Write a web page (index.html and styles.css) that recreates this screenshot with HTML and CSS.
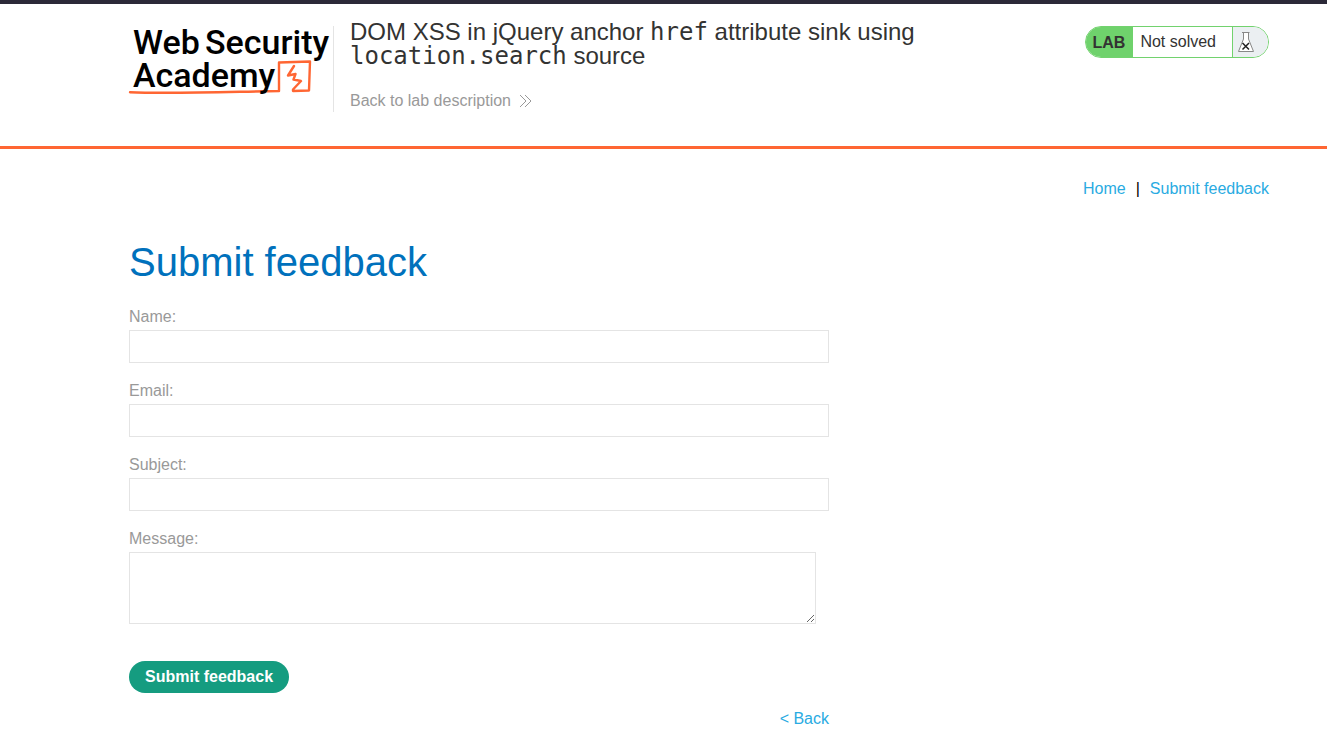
FILE: index.html
```html
<!DOCTYPE html>
<html lang="en">
<head>
<meta charset="utf-8">
<title>DOM XSS in jQuery anchor href attribute sink using location.search source</title>
<link rel="stylesheet" href="styles.css">
</head>
<body>
<header class="lab-header">
  <div class="container header-row">
    <a class="logo" href="#" aria-label="Web Security Academy">
      <svg width="204" height="72" viewBox="0 0 204 72">
        <path class="logo-line" d="M1 66.200C40 68 100 65.800 150 65V36.500L181 35.500L180 64.500L164 65V63.500L172 55L164.500 53.500L166.500 48L159 49.500L165 40"/>
        <g class="logo-text">
          <text x="4" y="28">Web</text>
          <text x="76" y="28">Security</text>
          <text x="4" y="61">Academy</text>
        </g>
      </svg>
    </a>
    <div class="title-block">
      <h2>DOM XSS in jQuery anchor <code>href</code> attribute sink using <code>location.search</code> source</h2>
      <a class="lab-link" href="#">Back to lab description
        <svg width="14" height="12" viewBox="0 0 14 12"><path d="M1 0L7 6L1 12M6 0L12 6L6 12"/></svg>
      </a>
    </div>
    <div class="status">
      <span class="status-tag">LAB</span>
      <span class="status-text">Not solved</span>
      <span class="status-icon">
        <svg width="18" height="22" viewBox="0 0 18 22">
          <path class="flask" d="M5 1.500H12.500M6.500 1.500V8L1.500 20.500H16.500L11.500 8V1.500"/>
          <path class="cross" d="M5.500 12L12 18.500M12 12L5.500 18.500"/>
        </svg>
      </span>
    </div>
  </div>
</header>
<main class="container">
  <nav class="top-links"><a href="#">Home</a><span>|</span><a href="#">Submit feedback</a></nav>
  <h1>Submit feedback</h1>
  <form class="feedback">
    <label for="name">Name:</label>
    <input id="name" type="text">
    <label for="email">Email:</label>
    <input id="email" type="email">
    <label for="subject">Subject:</label>
    <input id="subject" type="text">
    <label for="message">Message:</label>
    <textarea id="message"></textarea>
    <button type="submit">Submit feedback</button>
    <a class="back" href="#">&lt; Back</a>
  </form>
</main>
</body>
</html>
```
FILE: styles.css
```css
* { box-sizing: border-box; }
body {
  margin: 0;
  border-top: 4px solid #2b2938;
  background: #fff;
  color: #333332;
  font: 16px/20px "Liberation Sans", Arial, sans-serif;
}
a { color: #29abe2; text-decoration: none; }
svg { fill: none; overflow: visible; }
.container { padding: 0 58px 0 129px; }
.lab-header { border-bottom: 3px solid #ff6633; }
.header-row { display: flex; align-items: flex-start; padding-top: 22px; padding-bottom: 34px; }
.logo { flex: none; height: 86px; border-right: 1px solid #e4e4e4; }
.logo svg { display: block; }
.logo-text { fill: #000; font: 500 34px Roboto, sans-serif; }
.logo-line { stroke: #ff6633; stroke-width: 2.4; stroke-linejoin: round; stroke-linecap: round; }
.title-block { flex: 0 1 600px; padding: 0 16px; }
h2 { margin: -6px 0 0; font-size: 24px; line-height: 24px; font-weight: 400; }
code { font: 24px/24px "DejaVu Sans Mono", monospace; }
.lab-link { display: inline-flex; align-items: center; gap: 8px; margin-top: 23px; color: #999; }
.lab-link svg { stroke: #999; stroke-width: 1; }
.status {
  display: flex;
  flex: none;
  height: 32px;
  margin-left: auto;
  overflow: hidden;
  border: 1px solid #72d26e;
  border-radius: 16px;
  line-height: 30px;
}
.status-tag { padding: 0 8px 0 7px; background: #6fd26c; font-weight: 700; line-height: 32px; }
.status-text { padding: 0 16px 0 7px; }
.status-icon { width: 36px; padding: 4px; border-left: 1px solid #72d26e; background: #ebeff2; }
.status-icon svg { display: block; }
.flask { stroke: #888; fill: #fff; }
.cross { stroke: #222; stroke-width: 1.5; }
.top-links { display: flex; justify-content: flex-end; gap: 10px; padding-top: 30px; color: #000; }
h1 { margin: 40px 0 22px; color: #0071bc; font-size: 40px; line-height: 46px; font-weight: 400; }
.feedback { display: flex; flex-direction: column; align-items: flex-start; max-width: 700px; }
label { margin-bottom: 3px; line-height: 20px; color: #999; }
input, textarea { border: 1px solid #e4e4e4; background: #fff; font: inherit; }
input { width: 100%; height: 33px; margin-bottom: 18px; padding: 0 8px; }
textarea { display: block; width: 687px; max-width: 100%; height: 72px; padding: 8px; }
button {
  height: 32px;
  margin: 37px 0 16px;
  padding: 0 16px;
  border: 0;
  border-radius: 16px;
  background: #159c80;
  color: #fff;
  font: 700 16px/32px "Liberation Sans", Arial, sans-serif;
}
.back { align-self: flex-end; }
```
